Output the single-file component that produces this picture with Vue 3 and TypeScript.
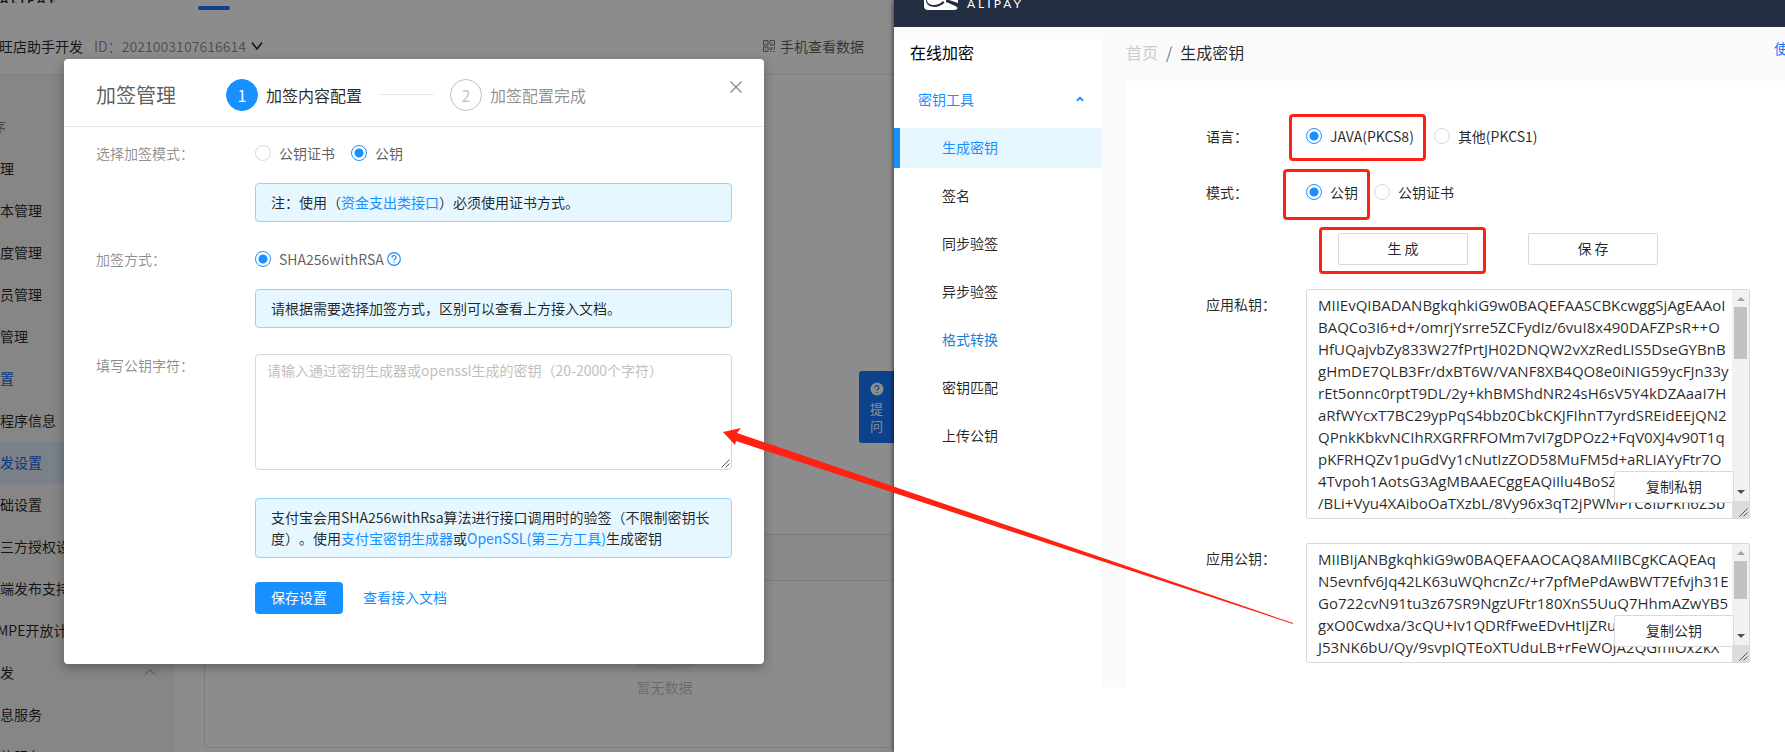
<script setup lang="ts">
import { ref } from 'vue'

interface NavItem {
  text: string
  kind?: 'muted' | 'link' | 'active' | 'group' | 'cut'
}

const consoleNav: NavItem[] = [
  { text: '序', kind: 'muted' },
  { text: '理' },
  { text: '本管理' },
  { text: '度管理' },
  { text: '员管理' },
  { text: '管理' },
  { text: '置', kind: 'link' },
  { text: '程序信息' },
  { text: '发设置', kind: 'active' },
  { text: '础设置' },
  { text: '三方授权设置' },
  { text: '端发布支持' },
  { text: 'MPE开放计划', kind: 'cut' },
  { text: '发', kind: 'group' },
  { text: '息服务' },
  { text: '信服务' },
]

const toolNav: NavItem[] = [
  { text: '生成密钥', kind: 'active' },
  { text: '签名' },
  { text: '同步验签' },
  { text: '异步验签' },
  { text: '格式转换', kind: 'link' },
  { text: '密钥匹配' },
  { text: '上传公钥' },
]

const signMode = ref('key')
const signMethod = ref('rsa2')
const publicKeyInput = ref('')
const language = ref('java')
const keyMode = ref('key')

const privateKey = ref(
  [
    'MIIEvQIBADANBgkqhkiG9w0BAQEFAASCBKcwggSjAgEAAoI',
    'BAQCo3I6+d+/omrjYsrre5ZCFydIz/6vuI8x490DAFZPsR++O',
    'HfUQajvbZy833W27fPrtJH02DNQW2vXzRedLIS5DseGYBnB',
    'gHmDE7QLB3Fr/dxBT6W/VANF8XB4QO8e0iNIG59ycFJn33y',
    'rEt5onnc0rptT9DL/2y+khBMShdNR24sH6sV5Y4kDZAaaI7H',
    'aRfWYcxT7BC29ypPqS4bbz0CbkCKJFIhnT7yrdSREidEEjQN2',
    'QPnkKbkvNCIhRXGRFRFOMm7vI7gDPOz2+FqV0XJ4v90T1q',
    'pKFRHQZv1puGdVy1cNutIzZOD58MuFM5d+aRLIAYyFtr7O',
    '4Tvpoh1AotsG3AgMBAAECggEAQiIlu4BoSZ0',
    '/BLi+Vyu4XAiboOaTXzbL/8Vy96x3qT2jPWMPrC8IbFkh6Z3b',
  ].join('\n'),
)
const publicKey = ref(
  [
    'MIIBIjANBgkqhkiG9w0BAQEFAAOCAQ8AMIIBCgKCAQEAq',
    'N5evnfv6Jq42LK63uWQhcnZc/+r7pfMePdAwBWT7Efvjh31E',
    'Go722cvN91tu3z67SR9NgzUFtr180XnS5UuQ7HhmAZwYB5',
    'gxO0Cwdxa/3cQU+Iv1QDRfFweEDvHtIjZRuf',
    'J53NK6bU/Qy/9svpIQTEoXTUduLB+rFeWOJA2QGmlOx2kX',
  ].join('\n'),
)
</script>

<template>
  <div class="desktop">
    <section class="console">
      <header class="topbar">
        <span class="brand">ALIPAY</span>
        <i class="brand-line"></i>
        <i class="tab-mark"></i>
      </header>
      <div class="appbar">
        <span class="app-name">旺店助手开发</span>
        <span class="app-id">ID：2021003107616614</span>
        <svg class="chev" viewBox="0 0 12 10" aria-hidden="true"><path d="M1 1.5l5 6.5 5-6.5" /></svg>
        <a class="phone" href="#">
          <svg viewBox="0 0 12 12" aria-hidden="true">
            <path d="M.5.5h4.5v4.5H.5zM7 .5h4.5v4.500H7zM.5 7h4.500v4.500H.5zM2.300 2.800h1M8.800 2.800h1M2.300 9.300h1M7 7v2.500h2V7M11.500 6.500v3M7 11.500h1.500M10 11.500h1.500" />
          </svg>
          手机查看数据
        </a>
      </div>
      <div class="console-body">
        <nav class="side">
          <a v-for="item in consoleNav" :key="item.text" href="#" class="side-item" :class="item.kind">
            {{ item.text }}
            <svg v-if="item.kind === 'group'" class="fold" viewBox="0 0 12 8" aria-hidden="true"><path d="M1 6.500L6 1.500l5 5" /></svg>
          </a>
        </nav>
        <main class="work">
          <div class="card">
            <div class="card-blank"></div>
            <div class="card-head"></div>
            <div class="empty">
              <svg viewBox="0 0 64 41" aria-hidden="true">
                <ellipse cx="32" cy="34" rx="32" ry="7" fill="#eeeeee" />
                <path d="M9 13h46v18a2 2 0 0 1-2 2H11a2 2 0 0 1-2-2z" fill="#fafafa" stroke="#d9d9d9" />
              </svg>
              <span>暂无数据</span>
            </div>
          </div>
        </main>
      </div>
      <button class="ask" type="button">
        <svg viewBox="0 0 14 14" aria-hidden="true">
          <circle cx="7" cy="7" r="6.500" fill="#fff" />
          <path d="M5 5.600a2 2 0 1 1 2.900 1.700c-.6.300-.9.600-.9 1.300M7 9.900v1.200" fill="none" stroke="#1677ff" stroke-width="1.200" />
        </svg>
        <span>提</span>
        <span>问</span>
      </button>
      <div class="mask"></div>

      <div class="modal" role="dialog" aria-labelledby="dlg-title">
        <header class="modal-head">
          <h2 id="dlg-title">加签管理</h2>
          <span class="dot on">1</span>
          <span class="step on">加签内容配置</span>
          <i class="step-line"></i>
          <span class="dot">2</span>
          <span class="step">加签配置完成</span>
          <button class="close" type="button" aria-label="关闭">
            <svg viewBox="0 0 12 12" aria-hidden="true"><path d="M.5.5l11 11M11.500.5l-11 11" /></svg>
          </button>
        </header>
        <form class="modal-body" @submit.prevent>
          <div class="row">
            <span class="lab">选择加签模式：</span>
            <div class="ctl">
              <div class="radios">
                <label><input v-model="signMode" type="radio" name="sign" value="cert" />公钥证书</label>
                <label><input v-model="signMode" type="radio" name="sign" value="key" />公钥</label>
              </div>
              <p class="note">注：使用（<a href="#">资金支出类接口</a>）必须使用证书方式。</p>
            </div>
          </div>
          <div class="row">
            <span class="lab">加签方式：</span>
            <div class="ctl">
              <div class="radios">
                <label><input v-model="signMethod" type="radio" name="method" value="rsa2" />SHA256withRSA</label>
                <svg class="help" viewBox="0 0 14 14" aria-hidden="true">
                  <circle cx="7" cy="7" r="6.300" />
                  <path d="M5 5.700a2 2 0 1 1 2.900 1.600c-.6.300-.9.600-.9 1.200M7 9.700v1.300" />
                </svg>
              </div>
              <p class="note">请根据需要选择加签方式，区别可以查看上方接入文档。</p>
            </div>
          </div>
          <div class="row">
            <label class="lab" for="pubkey">填写公钥字符：</label>
            <div class="ctl">
              <div class="entry-wrap">
                <textarea id="pubkey" v-model="publicKeyInput" class="entry" placeholder="请输入通过密钥生成器或openssl生成的密钥（20-2000个字符）"></textarea>
                <svg class="grip" viewBox="0 0 9 9" aria-hidden="true"><path d="M.5 8.500l8-8M4.500 8.500l4-4" /></svg>
              </div>
              <p class="note">
                支付宝会用SHA256withRsa算法进行接口调用时的验签（不限制密钥长<br />度）。使用<a href="#">支付宝密钥生成器</a>或<a href="#">OpenSSL(第三方工具)</a>生成密钥
              </p>
              <div class="actions">
                <button class="primary" type="submit">保存设置</button>
                <a href="#">查看接入文档</a>
              </div>
            </div>
          </div>
        </form>
      </div>
    </section>

    <section class="tool">
      <header class="tool-top">
        <svg viewBox="0 0 34 30" aria-hidden="true">
          <rect width="34" height="30" rx="4" fill="#fff" />
          <path d="M3 20c0 6 11 7 16 1l1.500 1.500c-6 7-18.500 5.500-18.500-2.500z" fill="#232e42" />
          <path d="M22 19l12 4v5c-3-3-8-4-12-6z" fill="#232e42" />
        </svg>
        <span>ALIPAY</span>
      </header>
      <div class="tool-body">
        <aside class="menu">
          <h1>在线加密</h1>
          <button class="menu-group" type="button">
            密钥工具
            <svg viewBox="0 0 8 6" aria-hidden="true"><path d="M1 4.800l3-3 3 3" /></svg>
          </button>
          <a v-for="item in toolNav" :key="item.text" href="#" class="menu-item" :class="item.kind">{{ item.text }}</a>
        </aside>
        <main class="page">
          <nav class="crumbs">
            <a href="#">首页</a><span class="slash">/</span><span>生成密钥</span>
            <a class="guide" href="#">使</a>
          </nav>
          <form class="panel" @submit.prevent>
            <div class="field lang">
              <span class="cap">语言：</span>
              <div class="opts">
                <label class="marked wide"><input v-model="language" type="radio" name="lang" value="java" />JAVA(PKCS8)</label>
                <label><input v-model="language" type="radio" name="lang" value="other" />其他(PKCS1)</label>
              </div>
            </div>
            <div class="field mode">
              <span class="cap">模式：</span>
              <div class="opts tight">
                <label class="marked tall"><input v-model="keyMode" type="radio" name="mode" value="key" />公钥</label>
                <label><input v-model="keyMode" type="radio" name="mode" value="cert" />公钥证书</label>
              </div>
            </div>
            <div class="field buttons">
              <span class="marked around"><button class="plain" type="button">生 成</button></span>
              <button class="plain" type="button">保 存</button>
            </div>
            <div class="field keys">
              <label class="cap" for="prv">应用私钥：</label>
              <div class="keybox large">
                <textarea id="prv" v-model="privateKey" wrap="off"></textarea>
                <div class="bar" aria-hidden="true">
                  <i class="up"></i><i class="thumb"></i><i class="down"></i>
                  <b><svg viewBox="0 0 9 9"><path d="M.5 8.500l8-8M4.500 8.500l4-4" /></svg></b>
                </div>
                <button class="plain copy" type="button">复制私钥</button>
              </div>
            </div>
            <div class="field keys">
              <label class="cap" for="pub">应用公钥：</label>
              <div class="keybox">
                <textarea id="pub" v-model="publicKey" wrap="off"></textarea>
                <div class="bar" aria-hidden="true">
                  <i class="up"></i><i class="thumb"></i><i class="down"></i>
                  <b><svg viewBox="0 0 9 9"><path d="M.5 8.500l8-8M4.500 8.500l4-4" /></svg></b>
                </div>
                <button class="plain copy" type="button">复制公钥</button>
              </div>
            </div>
          </form>
        </main>
      </div>
    </section>

    <svg class="arrow" viewBox="0 0 570 196" aria-hidden="true">
      <path d="M0 4L18 0l-4 5L570 195v1L13 13l-1 4z" />
    </svg>
  </div>
</template>

<style>
body {
  margin: 0;
  overflow: hidden;
}
</style>

<style scoped>
* {
  box-sizing: border-box;
}
.desktop {
  position: relative;
  display: grid;
  grid-template-columns: minmax(0, 894fr) minmax(0, 891fr);
  height: 100vh;
  overflow: hidden;
  font: 14px/22px "Noto Sans CJK SC", sans-serif;
  text-spacing-trim: space-all;
  color: rgba(0, 0, 0, 0.85);
}
a {
  color: #1890ff;
  text-decoration: none;
}
button,
textarea {
  font: inherit;
  color: inherit;
}
svg {
  flex: none;
}

/* console window */
.console {
  position: relative;
  display: flex;
  flex-direction: column;
  min-width: 0;
  overflow: hidden;
  background: #fff;
}
.topbar {
  display: flex;
  height: 20px;
}
.brand {
  width: 54px;
  height: 3px;
  overflow: hidden;
  font: bold 12px/0 Lato, sans-serif;
  letter-spacing: 3px;
}
.brand-line {
  width: 1px;
  height: 3px;
  background: #ccc;
}
.tab-mark {
  width: 32px;
  height: 4px;
  margin: 6px 0 0 143px;
  border-radius: 2px;
  background: #1677ff;
}
.appbar {
  display: flex;
  align-items: center;
  height: 55px;
  padding-bottom: 2px;
  border-bottom: 1px solid #e6e6e6;
}
.app-name {
  margin-left: -1px;
}
.app-id {
  margin-left: 11px;
  color: rgba(0, 0, 0, 0.45);
}
.chev {
  width: 12px;
  height: 10px;
  margin-left: 5px;
  fill: none;
  stroke: #222;
  stroke-width: 1.5;
}
.phone {
  display: flex;
  align-items: center;
  gap: 5px;
  margin: 0 30px 0 auto;
  color: rgba(0, 0, 0, 0.65);
}
.phone svg {
  width: 12px;
  height: 12px;
  fill: none;
  stroke: #777;
}
.console-body {
  display: flex;
  flex: 1;
  min-height: 0;
}
.side {
  flex: none;
  width: 174px;
  padding-top: 31px;
  overflow: hidden;
  background: #f5f5f5;
}
.side-item {
  display: flex;
  align-items: center;
  height: 42px;
  padding-bottom: 2px;
  color: rgba(0, 0, 0, 0.85);
  white-space: nowrap;
}
.side-item.muted {
  margin-left: -8px;
  color: rgba(0, 0, 0, 0.45);
}
.side-item.cut {
  margin-left: -3px;
}
.side-item.link,
.side-item.active {
  color: #1665e0;
}
.side-item.active {
  background: #e1ebfa;
}
.fold {
  width: 12px;
  height: 8px;
  margin: 0 18px 0 auto;
  fill: none;
  stroke: #888;
}
.work {
  flex: 1;
  min-width: 0;
  padding: 0 0 4px 30px;
}
.card {
  display: flex;
  flex-direction: column;
  height: 100%;
  border: solid #e3e3e3;
  border-width: 0 0 1px 1px;
  border-radius: 0 0 0 4px;
}
.card-blank {
  flex: none;
  height: 459px;
}
.card-head {
  flex: none;
  height: 47px;
  border: solid #e3e3e3;
  border-width: 1px 0;
  background: #fafafa;
}
.empty {
  display: flex;
  flex-direction: column;
  align-items: center;
  padding: 47px 0 0 230px;
  color: rgba(0, 0, 0, 0.25);
}
.empty svg {
  width: 64px;
  height: 41px;
  margin-bottom: 7px;
}
.ask {
  position: absolute;
  right: 0;
  top: 371px;
  display: flex;
  flex-direction: column;
  align-items: center;
  width: 35px;
  height: 72px;
  padding: 11px 0 0;
  border: 0;
  border-radius: 3px 0 0 3px;
  background: #1677ff;
  color: #fff;
  font-size: 13px;
  line-height: 17px;
}
.ask svg {
  width: 14px;
  height: 14px;
  margin-bottom: 4px;
}
.mask {
  position: absolute;
  inset: 0;
  background: rgba(0, 0, 0, 0.45);
}

/* dialog */
.modal {
  position: absolute;
  left: 64px;
  right: 130px;
  top: 59px;
  border-radius: 4px;
  background: #fff;
  box-shadow: 0 4px 12px rgba(0, 0, 0, 0.3);
}
.modal-head {
  display: flex;
  align-items: center;
  height: 68px;
  padding: 4px 20px 0 32px;
  border-bottom: 1px solid #e8e8e8;
}
h2 {
  margin: 0 50px 0 0;
  font-size: 20px;
  font-weight: 400;
  color: rgba(0, 0, 0, 0.65);
}
.dot {
  width: 32px;
  height: 32px;
  border: 1px solid rgba(0, 0, 0, 0.25);
  border-radius: 50%;
  font-size: 16px;
  line-height: 30px;
  text-align: center;
  color: rgba(0, 0, 0, 0.25);
}
.dot.on {
  border-color: #1890ff;
  background: #1890ff;
  color: #fff;
}
.step {
  margin-left: 8px;
  font-size: 16px;
  color: rgba(0, 0, 0, 0.45);
}
.step.on {
  color: rgba(0, 0, 0, 0.85);
}
.step-line {
  width: 56px;
  height: 1px;
  margin: 0 16px;
  background: #e8e8e8;
}
.close {
  display: flex;
  align-self: flex-start;
  margin: 12px 0 0 auto;
  padding: 6px 2px;
  border: 0;
  background: none;
}
.close svg {
  width: 12px;
  height: 12px;
  stroke: #888;
  stroke-width: 1.3;
}
.modal-body {
  display: flex;
  flex-direction: column;
  gap: 26px;
  padding: 15px 32px 50px;
}
.row {
  display: flex;
}
.lab {
  flex: none;
  align-items: flex-start;
  width: 159px;
  color: rgba(0, 0, 0, 0.45);
}
.ctl {
  flex: 1;
  min-width: 0;
}
.radios {
  display: flex;
  align-items: center;
  gap: 16px;
  height: 22px;
  color: rgba(0, 0, 0, 0.65);
}
label {
  display: flex;
  align-items: center;
}
input[type="radio"] {
  appearance: none;
  flex: none;
  width: 16px;
  height: 16px;
  margin: 0 8px 0 0;
  border: 1px solid #d9d9d9;
  border-radius: 50%;
  background: #fff;
}
input[type="radio"]:checked {
  border-color: #1890ff;
  background: radial-gradient(circle, #1890ff 4px, #fff 5px);
}
.help {
  width: 14px;
  height: 14px;
  margin-left: -13px;
  fill: none;
  stroke: #1890ff;
  stroke-width: 1.2;
}
.note {
  margin: 19px 0 0;
  padding: 8px 15px;
  border: 1px solid #91d5ff;
  border-radius: 4px;
  background: #e6f7ff;
  line-height: 21px;
  white-space: nowrap;
}
.entry-wrap {
  position: relative;
  display: flex;
}
.entry {
  width: 100%;
  height: 116px;
  padding: 4px 11px;
  border: 1px solid #d9d9d9;
  border-radius: 4px;
  outline: 0;
  resize: none;
  background: #fff;
}
.entry::placeholder {
  color: #bfbfbf;
}
.grip {
  position: absolute;
  right: 2px;
  bottom: 2px;
  width: 9px;
  height: 9px;
  stroke: #555;
}
.entry-wrap + .note {
  margin-top: 28px;
}
.actions {
  display: flex;
  align-items: center;
  gap: 20px;
  margin-top: 24px;
}
.primary {
  width: 88px;
  height: 32px;
  padding: 0 0 2px;
  border: 0;
  border-radius: 4px;
  background: #1890ff;
  color: #fff;
}
.actions a {
  padding-bottom: 2px;
}

/* key tool window */
.tool {
  position: relative;
  display: flex;
  flex-direction: column;
  min-width: 0;
  background: #fff;
  box-shadow: 0 0 5px rgba(0, 0, 0, 0.8);
}
.tool-top {
  display: flex;
  align-items: flex-end;
  gap: 9px;
  height: 27px;
  padding: 0 30px 17px;
  overflow: hidden;
  background: #232e42;
  color: #fff;
}
.tool-top svg {
  width: 34px;
  height: 30px;
}
.tool-top span {
  font: 12px/12px Lato, sans-serif;
  letter-spacing: 3px;
}
.tool-body {
  display: flex;
  height: 660px;
  padding-top: 12px;
  background: #fafafa;
}
.menu {
  flex: none;
  width: 208px;
  background: #fff;
}
h1 {
  margin: 0 0 17px;
  padding: 2px 16px 0;
  font-size: 16px;
  font-weight: 400;
  line-height: 22px;
  color: #000;
}
.menu-group {
  display: flex;
  align-items: center;
  justify-content: space-between;
  width: 100%;
  height: 40px;
  padding: 0 18px 2px 24px;
  border: 0;
  background: none;
  color: #1890ff;
}
.menu-group svg {
  width: 8px;
  height: 6px;
  fill: none;
  stroke: #1890ff;
  stroke-width: 2;
}
.menu-item {
  display: block;
  height: 40px;
  margin-top: 8px;
  padding-left: 48px;
  line-height: 38px;
  color: rgba(0, 0, 0, 0.85);
}
.menu-item.active {
  padding-left: 42px;
  border-left: 6px solid #1890ff;
  background: #e6f7ff;
  color: #1890ff;
}
.menu-item.link {
  color: #1b80dd;
}
.page {
  display: flex;
  flex: 1;
  flex-direction: column;
  min-width: 0;
  padding-left: 24px;
}
.crumbs {
  display: flex;
  height: 42px;
  padding-top: 2px;
  font-size: 16px;
}
.crumbs a:first-child {
  color: #ccc;
}
.slash {
  margin: 0 8px;
  color: #777;
}
.crumbs .guide {
  margin: -4px -3px 0 auto;
  font-size: 14px;
  color: #1677ff;
}
.panel {
  flex: 1;
  padding: 44px 0 0 80px;
  background: #fff;
}
.field {
  display: flex;
}
.cap {
  flex: none;
  align-items: flex-start;
  width: 100px;
}
.opts {
  display: flex;
  gap: 20px;
}
.tight {
  gap: 16px;
}
.mode {
  margin-top: 34px;
}
.marked {
  position: relative;
}
.marked::after {
  content: "";
  position: absolute;
  border: 3px solid #ff2111;
  border-radius: 4px;
  pointer-events: none;
}
.wide::after {
  inset: -11px -12px -14px -17px;
}
.tall::after {
  inset: -12px -12px -17px -23px;
}
.around::after {
  inset: -6px -18px -9px -19px;
}
.buttons {
  gap: 60px;
  margin-top: 30px;
  padding-left: 132px;
}
.plain {
  display: block;
  width: 130px;
  height: 32px;
  padding: 0 0 2px;
  border: 1px solid #d9d9d9;
  border-radius: 2px;
  background: #fff;
}
.keys {
  margin-top: 24px;
}
.keys .cap {
  padding-top: 4px;
}
.keybox {
  position: relative;
  display: flex;
  width: 444px;
  height: 120px;
  border: 1px solid #d9d9d9;
  border-radius: 2px;
}
.keybox.large {
  height: 230px;
}
.keybox textarea {
  flex: 1;
  min-width: 0;
  margin: 4px 0;
  padding: 0 0 0 11px;
  border: 0;
  outline: 0;
  resize: none;
  overflow: hidden;
  background: none;
  font-family: "Open Sans", sans-serif;
  font-size: 15px;
  white-space: pre;
}
.bar {
  display: flex;
  flex-direction: column;
  align-items: center;
  width: 17px;
  background: #f1f1f1;
}
.up,
.down {
  width: 0;
  height: 0;
  border: solid transparent;
  border-width: 0 4px 4px;
}
.up {
  margin: 7px 0 6px;
  border-bottom-color: #a3a3a3;
}
.down {
  margin: auto 0 7px;
  border-width: 4px 4px 0;
  border-top-color: #505050;
}
.thumb {
  width: 13px;
  height: 38px;
  background: #c1c1c1;
}
.large .thumb {
  height: 52px;
}
.bar b {
  display: flex;
  align-items: flex-end;
  justify-content: flex-end;
  width: 17px;
  height: 17px;
  padding: 1px;
  background: #dcdcdc;
}
.bar svg {
  width: 9px;
  height: 9px;
  stroke: #555;
}
.copy {
  position: absolute;
  right: 15px;
  bottom: 15px;
  width: 120px;
}
.arrow {
  position: absolute;
  left: 723px;
  top: 428px;
  width: 570px;
  height: 196px;
  fill: #ff2111;
  pointer-events: none;
}
</style>
